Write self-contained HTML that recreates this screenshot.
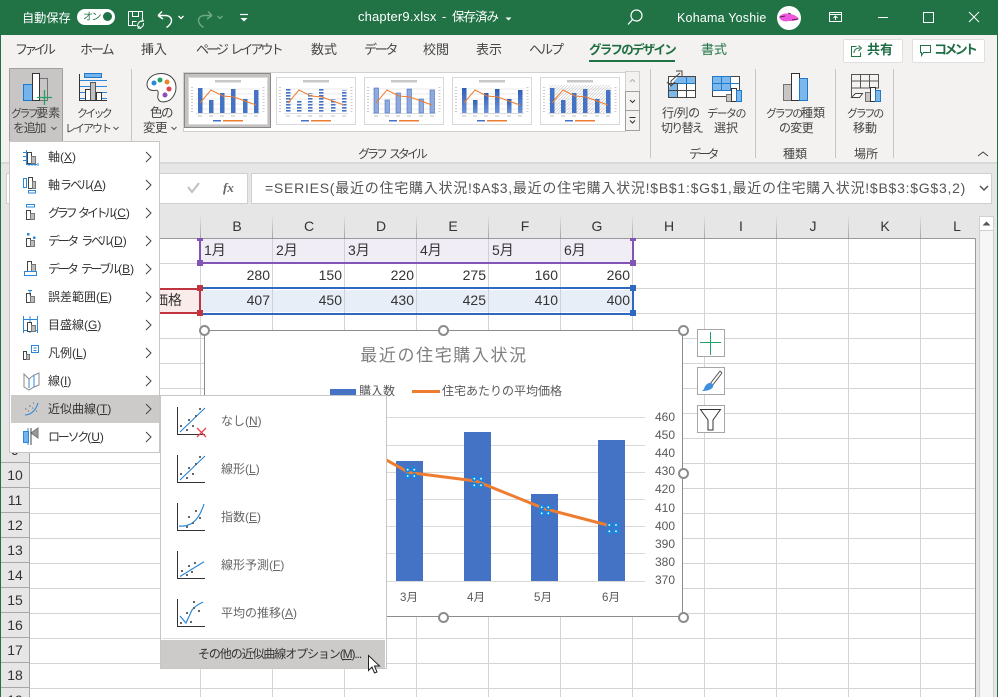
<!DOCTYPE html>
<html lang="ja"><head><meta charset="utf-8"><title>chapter9.xlsx</title>
<style>
html,body{margin:0;padding:0;width:998px;height:697px;overflow:hidden}
body{position:relative;background:#fff;font-family:"Liberation Sans","Noto Sans CJK JP",sans-serif;font-size:12px;color:#444}
div,svg{position:absolute}
.t{white-space:nowrap;line-height:16px;height:16px}
.c{text-align:center}
.w{color:#fff}
.tab{top:42px;font-size:13px;color:#444}
.r{white-space:nowrap;line-height:15px;height:15px;color:#444;font-size:12px}
.k{font-size:11px;letter-spacing:-2.6px}
.sep{top:69px;width:1px;height:89px;background:#c8c6c4}
.ch{top:218px;height:16px;line-height:16px;width:72px;text-align:center;font-size:14px;color:#333;margin-left:1px}
.cs{top:214px;width:1px;height:24px;background:linear-gradient(#e6e6e6,#a6a6a6)}
.rn{left:1px;width:28px;height:24px;background:#e6e6e6;border-bottom:1px solid #a6a6a6;text-align:center;font-size:14px;line-height:25px;color:#333;overflow:hidden}
.cell{height:24px;line-height:25px;font-size:14px;color:#333;white-space:nowrap}
.m{left:48px;color:#333;white-space:nowrap;font-size:12px;line-height:16px}
u{text-underline-offset:1px}
.ax{left:640px;width:35px;text-align:right;font-size:12px;line-height:14px;color:#595959}
.mx{color:#595959;font-size:11.5px;line-height:14px;width:30px;text-align:center}
.sm{left:221px;color:#666;font-size:12px;line-height:16px;white-space:nowrap}
.hd{width:6px;height:6px}
.cb{left:697px;width:26px;height:26px;background:#fff;border:1px solid #a6a6a6}
</style></head><body>

<!-- title bar -->
<div style="left:0;top:0;width:998px;height:35px;background:#217346"></div>
<div class="t w" style="left:22px;top:10px;font-size:12.2px">自動保存</div>
<div style="left:77px;top:9px;width:38px;height:16px;background:#fff;border-radius:8px"></div>
<div class="t" style="left:83px;top:10px;font-size:10px;color:#217346;letter-spacing:-1.500px">オン</div>
<div style="left:103px;top:12px;width:9px;height:9px;border-radius:50%;background:#217346"></div>
<svg style="left:0;top:0" width="998" height="35" fill="none" stroke="#fff">
 <path d="M128.500 11.500h14v8M128.500 11.500v14h8M132.500 11.500v5h6v-5M132.500 25.500v-4h4"/>
 <path d="M138 27a4.500 4.500 0 0 1 5-6M143.500 23a4.500 4.500 0 0 1-5 5M142 18.500l1.500 2.500-3 .5M139.500 26l-1.500 2 3 .5" stroke-width="1"/>
 <path d="M158 15.500l4-4M158 15.500l5 3.500M158.500 15.500h7c4 0 6 2.500 6 5 0 3-2 5-5 7" stroke-width="1.400"/>
 <path d="M178.500 16l2.500 2.500L183.500 16" stroke-width="1.300"/>
 <g stroke="#6ea98a"><path d="M212 15.500l-4-4M212 15.500l-5 3.500M211.500 15.500h-7c-4 0-6 2.500-6 5 0 3 2 5 5 7" stroke-width="1.400"/><path d="M217.500 16l2.500 2.500L222.500 16" stroke-width="1.300"/></g>
 <path d="M240 14.500h8" stroke-width="1.200"/><path d="M240.500 18h7l-3.500 3.500z" fill="#fff" stroke="none"/>
 <path d="M505.500 17.500h6l-3 3z" fill="#fff" stroke="none"/>
 <circle cx="636.500" cy="15.500" r="5.500" stroke-width="1.200"/><path d="M632.500 19.500l-4.500 5" stroke-width="1.300"/>
 <path d="M829.500 12.500h12v9h-12zM829.500 14.500h12" stroke-width="1"/><path d="M835.500 20v-4M833.500 18l2-2 2 2" stroke-width="1"/>
 <path d="M878 17.500h10"/><rect x="923.500" y="12.500" width="10" height="10"/><path d="M969 12l10 10M979 12l-10 10"/>
</svg>
<div class="t w" style="left:358px;top:9px;font-size:13px;letter-spacing:.15px">chapter9.xlsx</div>
<div class="t w" style="left:442px;top:9px;font-size:13px">-</div>
<div class="t w" style="left:452px;top:9px;font-size:12.500px;letter-spacing:-1px">保存済み</div>
<div class="t w" style="left:677px;top:10px;font-size:12.5px;letter-spacing:.2px">Kohama Yoshie</div>
<div style="left:777px;top:6px;width:24px;height:24px;border-radius:50%;background:#fff"></div>
<svg style="left:777px;top:6px" width="24" height="24"><path d="M2 11c3-4 8-4 10-3 4 0 8 2 10 5-3 2-8 2-10 2-5 1-8 0-10-4z" fill="#ee55dd"/><path d="M3 11l5-1M15 14l6-1M11 7l3 1" stroke="#222" stroke-width=".7"/></svg>

<!-- tab bar & ribbon -->
<div style="left:0;top:35px;width:998px;height:127px;background:#f3f2f1"></div>
<div style="left:0;top:162px;width:998px;height:2px;background:#d8d8d8"></div>
<div class="t tab" style="left:15px;letter-spacing:-3.700px">ファイル</div>
<div class="t tab" style="left:80px;letter-spacing:-2px">ホーム</div>
<div class="t tab" style="left:141px">挿入</div>
<div class="t tab" style="left:196px;letter-spacing:-2.900px;word-spacing:3.500px">ページ レイアウト</div>
<div class="t tab" style="left:311px">数式</div>
<div class="t tab" style="left:364px;letter-spacing:-2.300px">データ</div>
<div class="t tab" style="left:423px">校閲</div>
<div class="t tab" style="left:476px">表示</div>
<div class="t tab" style="left:529px;letter-spacing:-2px">ヘルプ</div>
<div class="t tab" style="left:589px;color:#1e6e41;font-weight:bold;font-size:12.500px;letter-spacing:-1.750px">グラフのデザイン</div>
<div style="left:589px;top:60px;width:86px;height:2px;background:#217346"></div>
<div class="t tab" style="left:701px;color:#217346">書式</div>
<div style="left:843px;top:39px;width:58px;height:22px;background:#fff;border:1px solid #e1dfdd;border-radius:2px"></div>
<div class="t" style="left:867px;top:42px;font-weight:bold;color:#1f6d45;font-size:13px">共有</div>
<svg style="left:850px;top:44px" width="14" height="14" fill="none" stroke="#217346"><path d="M6.500 2.500h-5v10h9v-4"/><path d="M4 9c0-3 2-5 6-5M8.500 1.500l3 2.500-3 3"/></svg>
<div style="left:912px;top:39px;width:71px;height:22px;background:#fff;border:1px solid #e1dfdd;border-radius:2px"></div>
<div class="t" style="left:934px;top:42px;font-weight:bold;color:#1f6d45;font-size:13px;letter-spacing:-2.700px">コメント</div>
<svg style="left:920px;top:44px" width="12" height="13" fill="none" stroke="#217346"><path d="M.5 1.500h10v7h-7l-2 3v-3h-1z"/></svg>

<div style="left:9px;top:68px;width:52px;height:73px;background:#c8c6c4;border:1px solid #a19f9d"></div>
<div class="sep" style="left:131px"></div><div class="sep" style="left:650px"></div><div class="sep" style="left:755px"></div><div class="sep" style="left:835px"></div><div class="sep" style="left:893px"></div>

<svg style="left:0;top:60px" width="998" height="75">
 <g transform="translate(0,-60)">
 <rect x="23.500" y="84.500" width="9" height="16" fill="#75b3ec" stroke="#1f78c8"/><rect x="38.500" y="78.500" width="9" height="22" fill="#c8c6c4" stroke="#737373"/><rect x="32.500" y="73.500" width="7" height="27" fill="#fff" stroke="#333"/>
 <path d="M44.500 90v15M37 97.500h15" stroke="#21a366" stroke-width="1.300"/>
 <rect x="84.500" y="73.500" width="17" height="4" fill="#75b3ec" stroke="#1f78c8"/>
 <path d="M79 80.500h28M79 86.500h28M79 92.500h28M79 98.500h28" stroke="#2b88d8"/>
 <rect x="85.500" y="89.500" width="5" height="11" fill="#fff" stroke="#333"/><rect x="90.500" y="82.500" width="5" height="18" fill="#c0c0c0" stroke="#555"/><rect x="96.500" y="92.500" width="5" height="8" fill="#fff" stroke="#333"/>
 <path d="M79.500 74v26.500H107" fill="none" stroke="#333"/>
 <path d="M161 73.500c-9 0-14 6-14 11 0 4 3 6 6 6 3 0 4-1 5 1 1 3-1 4 0 7 1 3 4 4 8 3 6-1 10-8 10-14 0-8-6-14-15-14z" fill="#fff" stroke="#444" stroke-width="1"/>
 <circle cx="154" cy="83" r="2.500" fill="#2b88d8"/><circle cx="160" cy="80" r="2.500" fill="#21a366"/><circle cx="167" cy="82" r="2.500" fill="#e8862e"/><circle cx="169" cy="89" r="2.500" fill="#e0434d"/><circle cx="165" cy="95" r="2.500" fill="#8d4fb5"/>
 <path d="M51.500 127l2.500 2.500 2.500-2.500M113.500 127l2.500 2.500 2.500-2.500M171.500 127l2.500 2.500 2.500-2.500" fill="none" stroke="#555"/>
 <rect x="668.500" y="76.500" width="27" height="21" fill="#fff"/>
 <path d="M678 76.500h17.500v7H677v7h-8.500V88z" fill="#7cb8ec"/>
 <rect x="668.500" y="90.500" width="9" height="7" fill="#7cb8ec"/>
 <rect x="668.500" y="76.500" width="27" height="21" fill="none" stroke="#444"/>
 <path d="M668.500 83.500h27M668.500 90.500h27M677.500 83.500v14M686.500 76.500v21" stroke="#444" fill="none"/>
 <path d="M678 83.500h17M686.500 76.500v7" stroke="#1f78c8"/>
 <path d="M667 82l4 4 4-4M671 85v-4l9-8M676 71h6v6" fill="none" stroke="#444"/>
 <rect x="712.500" y="76.500" width="27" height="20" fill="#fff" stroke="#444"/><rect x="712.500" y="76.500" width="18" height="14" fill="#7cb8ec" stroke="#1f78c8"/><path d="M712.500 83.500h27M721.500 76.500v14" stroke="#1f78c8"/>
 <rect x="726.500" y="94.500" width="5" height="7" fill="#c8c6c4" stroke="#737373"/><rect x="731.500" y="88.500" width="5" height="13" fill="#fff" stroke="#333"/><rect x="736.500" y="90.500" width="5" height="11" fill="#7cb8ec" stroke="#1f78c8"/>
 <rect x="783.500" y="84.500" width="8" height="16" fill="#c8c6c4" stroke="#737373"/><rect x="791.500" y="73.500" width="8" height="27" fill="#fff" stroke="#333"/><rect x="799.500" y="78.500" width="8" height="22" fill="#7cb8ec" stroke="#1f78c8"/>
 <path d="M851.500 96.500v-22h27v14M851.500 81h27M851.500 88h27M860.500 74v14M869.500 74v14" fill="none" stroke="#555"/>
 <path d="M851.500 97.500h8l3-4h-7z" fill="#fff" stroke="#444"/>
 <rect x="865.500" y="92.500" width="5" height="9" fill="#c8c6c4" stroke="#737373"/><rect x="870.500" y="87.500" width="5" height="14" fill="#fff" stroke="#333"/><rect x="875.500" y="90.500" width="5" height="11" fill="#7cb8ec" stroke="#1f78c8"/>
 </g>
</svg>

<div class="r" style="left:11px;top:106px"><span class="k">グラフ</span>要素</div>
<div class="r" style="left:13px;top:121px;letter-spacing:-1.300px">を追加</div>
<div class="r" style="left:77px;top:106px"><span class="k" style="letter-spacing:-2.750px">クイック</span></div>
<div class="r" style="left:65px;top:121px"><span class="k" style="letter-spacing:-2px">レイアウト</span></div>
<div class="r" style="left:150px;top:106px;font-size:12.500px;letter-spacing:-1.500px">色の</div>
<div class="r" style="left:143px;top:121px;font-size:12.500px;letter-spacing:-.500px">変更</div>
<div class="r" style="left:662px;top:106px;letter-spacing:-.4px">行/列の</div>
<div class="r" style="left:661px;top:121px;letter-spacing:-1.700px">切り替え</div>
<div class="r" style="left:707px;top:106px"><span class="k" style="letter-spacing:-1.500px">データの</span></div>
<div class="r" style="left:714px;top:121px">選択</div>
<div class="r" style="left:766px;top:106px"><span class="k" style="letter-spacing:-2.250px">グラフの</span>種類</div>
<div class="r" style="left:779px;top:121px;letter-spacing:-.700px">の変更</div>
<div class="r" style="left:847px;top:106px"><span class="k" style="letter-spacing:-2.250px">グラフの</span></div>
<div class="r" style="left:853px;top:121px">移動</div>
<div class="t" style="left:358px;top:146px;letter-spacing:-3px;word-spacing:3.500px">グラフ スタイル</div>
<div class="t" style="left:689px;top:146px;letter-spacing:-2.800px">データ</div>
<div class="t c" style="left:770px;top:146px;width:50px">種類</div>
<div class="t c" style="left:841px;top:146px;width:50px">場所</div>
<svg style="left:975px;top:148px" width="16" height="12" fill="none" stroke="#444"><path d="M3 8l5-4 5 4"/></svg>

<!-- gallery -->
<div style="left:183px;top:72px;width:441px;height:58px;background:#fff;border:1px solid #d2d0ce"></div>
<div style="left:184px;top:73px;width:87px;height:55px;background:#c4c2c0;border:1px solid #8a8886;box-sizing:border-box"></div>
<svg style="left:0;top:60px" width="640" height="75">
 <defs>
  <pattern id="st" width="4" height="3" patternUnits="userSpaceOnUse"><rect width="4" height="1.600" fill="#4472c4"/></pattern>
  <pattern id="ht" width="3" height="3" patternUnits="userSpaceOnUse"><path d="M0 3L3 0" stroke="#c4c4c4" stroke-width=".6"/></pattern>
  <linearGradient id="gr" x1="0" y1="0" x2="0" y2="1"><stop offset="0" stop-color="#2f5fb5"/><stop offset="1" stop-color="#6d94d8"/></linearGradient>
  <g id="fr">
   <rect x=".5" y=".5" width="79" height="47" fill="#fff" stroke="#d9d9d9"/>
   <path d="M8 12h64M8 17h64M8 22h64M8 27h64M8 32h64" stroke="#e2e2e2" stroke-width=".8"/>
   <rect x="27" y="3" width="26" height="2.500" fill="#c8c8c8"/>
   <path d="M8 36.500h64" stroke="#bbb" stroke-width=".6"/>
   <path d="M10 39h4M21 39h4M32 39h4M43 39h4M55 39h4M66 39h4" stroke="#aaa" stroke-width=".8"/>
   <path d="M4 10v26M75.500 10v26" stroke="#ccc" stroke-width="2" stroke-dasharray="1 2"/>
  </g>
  <path id="ln" d="M12 26L23 13 35 19 46 20 57 24 68 28" fill="none" stroke="#ed7d31" stroke-width="1"/>
  <g id="lg"><rect x="25" y="43" width="8" height="1.500" fill="#4472c4"/><rect x="35" y="43" width="20" height="1.500" fill="#ed7d31"/></g>
  <g id="bs"><rect x="10" y="11" width="4.500" height="25"/><rect x="21" y="23" width="4.500" height="13"/><rect x="32" y="16" width="4.500" height="20"/><rect x="43" y="12" width="4.500" height="24"/><rect x="55" y="22" width="4.500" height="14"/><rect x="66" y="13" width="4.500" height="23"/></g>
 </defs>
 <g transform="translate(0,-60)">
  <g transform="translate(188,77)"><use href="#fr"/><use href="#bs" fill="#4472c4"/><use href="#ln"/><use href="#lg"/></g>
  <g transform="translate(276,77)"><use href="#fr"/><use href="#bs" fill="url(#st)"/><use href="#ln"/><use href="#lg"/></g>
  <g transform="translate(364,77)"><use href="#fr"/><use href="#bs" fill="#8fa9dc" stroke="#4472c4" stroke-width=".6"/><use href="#ln"/><use href="#lg"/></g>
  <g transform="translate(452,77)"><use href="#fr"/><use href="#bs" fill="url(#gr)"/><use href="#ln"/><use href="#lg"/></g>
  <g transform="translate(540,77)"><use href="#fr"/><rect x="9" y="8" width="62" height="28" fill="url(#ht)"/><use href="#bs" fill="#4472c4"/><use href="#ln"/><use href="#lg"/></g>
  <rect x="625.500" y="71.500" width="14" height="20" fill="#f3f2f1" stroke="#d2d0ce"/><rect x="625.500" y="91.500" width="14" height="19" fill="#f3f2f1" stroke="#a19f9d"/><rect x="625.500" y="110.500" width="14" height="20" fill="#f3f2f1" stroke="#a19f9d"/>
  <path d="M630 82l2.500-2.500L635 82" fill="none" stroke="#b0b0b0"/><path d="M630 100l2.500 2.500L635 100" fill="none" stroke="#333"/><path d="M629.500 117.500h6M630 120.500l2.500 2.500 2.500-2.500" fill="none" stroke="#333"/>
 </g>
</svg>

<!-- formula bar -->
<div style="left:0;top:164px;width:998px;height:74px;background:#e6e6e6"></div>
<div style="left:6px;top:173px;width:240px;height:29px;background:#fff;border:1px solid #d0d0d0"></div>
<div style="left:251px;top:173px;width:739px;height:29px;background:#fff;border:1px solid #d0d0d0"></div>
<svg style="left:180px;top:178px" width="60" height="20" fill="none"><path d="M8 9l4 5 7-9" stroke="#c0c0c0" stroke-width="2"/></svg>
<div style="left:223px;top:180px;font-family:'Liberation Serif',serif;font-style:italic;font-weight:bold;font-size:13px;line-height:16px;color:#666">fx</div>
<div class="t" style="left:265px;top:180px;font-size:14px;color:#555;letter-spacing:.75px">=SERIES(最近の住宅購入状況!$A$3,最近の住宅購入状況!$B$1:$G$1,最近の住宅購入状況!$B$3:$G$3,2)</div>
<svg style="left:978px;top:184px" width="12" height="10" fill="none"><path d="M2 2l4 4 4-4" stroke="#555" stroke-width="1.500"/></svg>

<!-- sheet -->
<div style="left:30px;top:239px;width:945px;height:458px;background:#fff;background-image:linear-gradient(to top,#d4d4d4 1px,transparent 1px);background-size:100% 25px"></div>
<div style="left:200px;top:239px;width:775px;height:458px;background-image:linear-gradient(to right,#d4d4d4 1px,transparent 1px);background-size:72px 100%"></div>
<div style="left:30px;top:238px;width:945px;height:1px;background:#9a9a9a"></div>
<div style="left:975px;top:238px;width:1px;height:459px;background:#9a9a9a"></div>
<div style="left:976px;top:238px;width:22px;height:459px;background:#e6e6e6"></div>
<div style="left:979px;top:216px;width:15px;height:481px;background:#f6f6f6;border-left:1px solid #d0d0d0;border-right:1px solid #d0d0d0;box-sizing:border-box"></div>
<div style="left:979px;top:216px;width:15px;height:15px;background:#fff;border:1px solid #d0d0d0;box-sizing:border-box"></div>
<svg style="left:981px;top:220px" width="11" height="7"><path d="M1.500 5.500h8L5.500 1.500z" fill="#555"/></svg>
<div style="left:29px;top:238px;width:1px;height:459px;background:#a6a6a6"></div>
<div style="left:1px;top:238px;width:28px;height:459px;background:#e6e6e6"></div>

<div class="cs" style="left:200px"></div><div class="cs" style="left:272px"></div><div class="cs" style="left:344px"></div><div class="cs" style="left:416px"></div><div class="cs" style="left:488px"></div><div class="cs" style="left:560px"></div><div class="cs" style="left:632px"></div><div class="cs" style="left:704px"></div><div class="cs" style="left:776px"></div><div class="cs" style="left:848px"></div><div class="cs" style="left:920px"></div>
<div class="ch" style="left:200px">B</div><div class="ch" style="left:272px">C</div><div class="ch" style="left:344px">D</div><div class="ch" style="left:416px">E</div><div class="ch" style="left:488px">F</div><div class="ch" style="left:560px">G</div><div class="ch" style="left:632px">H</div><div class="ch" style="left:704px">I</div><div class="ch" style="left:776px">J</div><div class="ch" style="left:848px">K</div><div class="ch" style="left:920px">L</div>

<div class="rn" style="top:438px">9</div><div class="rn" style="top:463px">10</div><div class="rn" style="top:488px">11</div><div class="rn" style="top:513px">12</div><div class="rn" style="top:538px">13</div><div class="rn" style="top:563px">14</div><div class="rn" style="top:588px">15</div><div class="rn" style="top:613px">16</div><div class="rn" style="top:638px">17</div><div class="rn" style="top:663px">18</div><div class="rn" style="top:688px;height:9px;border:0">19</div>

<!-- selected ranges -->
<div style="left:201px;top:239px;width:431px;height:23px;background-color:#f0edf7;background-image:linear-gradient(to right,#d0d0d8 1px,transparent 1px);background-size:72px 100%;background-position:71px 0"></div>
<div style="left:201px;top:290px;width:431px;height:22px;background-color:#e8eef8;background-image:linear-gradient(to right,#cdd3dc 1px,transparent 1px);background-size:72px 100%;background-position:71px 0"></div>
<div style="left:150px;top:290px;width:50px;height:22px;background:#fbecec"></div>
<div style="left:150px;top:288px;width:50px;height:2px;background:#c0343f"></div><div style="left:150px;top:312px;width:50px;height:2px;background:#c0343f"></div>
<div style="left:199px;top:290px;width:2px;height:22px;background:#c0343f"></div>
<div style="left:200px;top:262px;width:432px;height:2px;background:#8055b5"></div>
<div style="left:199px;top:240px;width:2px;height:22px;background:#8055b5"></div><div style="left:632px;top:240px;width:2px;height:22px;background:#8055b5"></div>
<div style="left:200px;top:287px;width:432px;height:2px;background:#2f68c0"></div><div style="left:200px;top:313px;width:432px;height:2px;background:#2f68c0"></div>
<div style="left:632px;top:291px;width:2px;height:20px;background:#2f68c0"></div>
<div class="hd" style="left:197px;top:238px;height:3px;background:#8055b5"></div><div class="hd" style="left:630px;top:238px;height:3px;background:#8055b5"></div><div class="hd" style="left:197px;top:260px;background:#8055b5"></div><div class="hd" style="left:630px;top:260px;background:#8055b5"></div>
<div class="hd" style="left:197px;top:285px;background:#c0343f"></div><div class="hd" style="left:197px;top:310px;background:#c0343f"></div><div class="hd" style="left:630px;top:285px;background:#2f68c0"></div><div class="hd" style="left:630px;top:310px;background:#2f68c0"></div>
<div class="cell" style="left:204px;top:238px">1月</div><div class="cell" style="left:276px;top:238px">2月</div><div class="cell" style="left:348px;top:238px">3月</div><div class="cell" style="left:420px;top:238px">4月</div><div class="cell" style="left:492px;top:238px">5月</div><div class="cell" style="left:564px;top:238px">6月</div>
<div class="cell" style="left:200px;top:263px;width:70px;text-align:right">280</div><div class="cell" style="left:272px;top:263px;width:70px;text-align:right">150</div><div class="cell" style="left:344px;top:263px;width:70px;text-align:right">220</div><div class="cell" style="left:416px;top:263px;width:70px;text-align:right">275</div><div class="cell" style="left:488px;top:263px;width:70px;text-align:right">160</div><div class="cell" style="left:560px;top:263px;width:70px;text-align:right">260</div>
<div class="cell" style="left:200px;top:288px;width:70px;text-align:right">407</div><div class="cell" style="left:272px;top:288px;width:70px;text-align:right">450</div><div class="cell" style="left:344px;top:288px;width:70px;text-align:right">430</div><div class="cell" style="left:416px;top:288px;width:70px;text-align:right">425</div><div class="cell" style="left:488px;top:288px;width:70px;text-align:right">410</div><div class="cell" style="left:560px;top:288px;width:70px;text-align:right">400</div>
<div class="cell" style="left:154px;top:288px">価格</div>

<!-- chart -->
<div style="left:204px;top:330px;width:479px;height:287px;background:#fff;border:1px solid #8c8c8c;box-sizing:border-box"></div>
<svg style="left:0;top:0;pointer-events:none" width="998" height="697">
 <defs><g id="dt"><circle r="2.800" fill="#1588e0"/><circle r=".9" fill="#fff"/></g></defs>
 <path d="M380 417.500h265M380 445.500h265M380 472.500h265M380 499.500h265M380 526.500h265M380 553.500h265M380 581.500h265" stroke="#d9d9d9"/>
 <g fill="#4472c4"><rect x="396" y="461" width="27" height="120"/><rect x="464" y="432" width="27" height="149"/><rect x="531" y="494" width="27" height="87"/><rect x="598" y="440" width="27" height="141"/></g>
 <path d="M380 456.500L409 472.500 476 481 544 508.500 611 526" fill="none" stroke="#ed7d31" stroke-width="3" stroke-linejoin="round"/>
 <use href="#dt" x="407.700" y="469.700"/><use href="#dt" x="414.300" y="469.700"/><use href="#dt" x="407.700" y="476"/><use href="#dt" x="414.300" y="476"/>
 <use href="#dt" x="474.300" y="478.700"/><use href="#dt" x="481" y="478.700"/><use href="#dt" x="474.300" y="485.300"/><use href="#dt" x="481" y="485.300"/>
 <use href="#dt" x="541.700" y="507.300"/><use href="#dt" x="548.300" y="507.300"/><use href="#dt" x="541.700" y="513.300"/><use href="#dt" x="548.300" y="513.300"/>
 <use href="#dt" x="609.300" y="525"/><use href="#dt" x="616" y="525"/><use href="#dt" x="609.300" y="531.300"/><use href="#dt" x="616" y="531.300"/>
 <rect x="330" y="389" width="26" height="6" fill="#4472c4"/>
 <path d="M412 391.500h28" stroke="#ed7d31" stroke-width="3"/>
 <g fill="#fff" stroke="#8c8c8c" stroke-width="2"><circle cx="204.500" cy="330.500" r="4.500"/><circle cx="443.500" cy="330.500" r="4.500"/><circle cx="683.500" cy="330.500" r="4.500"/><circle cx="683.500" cy="473.500" r="4.500"/><circle cx="443.500" cy="617.500" r="4.500"/><circle cx="683.500" cy="617.500" r="4.500"/></g>
</svg>
<div class="t c" style="left:344px;top:344px;width:200px;height:24px;line-height:24px;font-size:17px;letter-spacing:1.6px;color:#7f7f7f">最近の住宅購入状況</div>
<div class="t" style="left:359px;top:383px;color:#595959">購入数</div>
<div class="t" style="left:442px;top:383px;color:#595959">住宅あたりの平均価格</div>
<div class="ax" style="top:410px">460</div><div class="ax" style="top:428px">450</div><div class="ax" style="top:446px">440</div><div class="ax" style="top:464px">430</div><div class="ax" style="top:482px">420</div><div class="ax" style="top:501px">410</div><div class="ax" style="top:519px">400</div><div class="ax" style="top:537px">390</div><div class="ax" style="top:555px">380</div><div class="ax" style="top:573px">370</div>
<div class="mx" style="left:394px;top:591px">3月</div><div class="mx" style="left:461px;top:591px">4月</div><div class="mx" style="left:528px;top:591px">5月</div><div class="mx" style="left:596px;top:591px">6月</div>

<div class="cb" style="top:329px"></div><div class="cb" style="top:367px"></div><div class="cb" style="top:405px"></div>
<svg style="left:697px;top:329px" width="28" height="104" fill="none">
 <path d="M13.500 3v23M3 13.500h21" stroke="#21a366"/>
 <path d="M23 42l-10 13M25 44L15 57M23 42l2 2" stroke="#555"/>
 <path d="M13 54c2 0 4 1 3 4-2 3-6 4-11 4 3-2 2-4 4-6 1-1 2-2 4-2z" fill="#3f8fdc"/>
 <path d="M3.500 80.500h20L16 91v10h-5V91z" stroke="#333"/>
</svg>

<!-- menu 1 -->
<div style="left:9px;top:141px;width:151px;height:312px;background:#fff;border:1px solid #c8c6c4;box-sizing:border-box"></div>
<div style="left:11px;top:395px;width:148px;height:28px;background:#cdcbc9"></div>
<div class="m" style="top:149px">軸(<u>X</u>)</div>
<div class="m" style="top:177px">軸<span style="letter-spacing:-2px">ラベル</span>(<u>A</u>)</div>
<div class="m" style="top:205px"><span style="letter-spacing:-3.200px;word-spacing:3.500px">グラフ タイトル</span>(<u>C</u>)</div>
<div class="m" style="top:233px"><span style="letter-spacing:-2.400px;word-spacing:3.500px">データ ラベル</span>(<u>D</u>)</div>
<div class="m" style="top:261px"><span style="letter-spacing:-2.500px;word-spacing:3.500px">データ テーブル</span>(<u>B</u>)</div>
<div class="m" style="top:289px">誤差範囲(<u>E</u>)</div>
<div class="m" style="top:317px">目盛線(<u>G</u>)</div>
<div class="m" style="top:345px">凡例(<u>L</u>)</div>
<div class="m" style="top:373px">線(<u>I</u>)</div>
<div class="m" style="top:401px">近似曲線(<u>T</u>)</div>
<div class="m" style="top:429px"><span style="letter-spacing:-2.200px">ローソク</span>(<u>U</u>)</div>
<svg style="left:0;top:140px" width="162" height="315" fill="none">
 <g transform="translate(0,-140)">
 <path d="M146 152l5 5-5 5M146 180l5 5-5 5M146 208l5 5-5 5M146 236l5 5-5 5M146 264l5 5-5 5M146 292l5 5-5 5M146 320l5 5-5 5M146 348l5 5-5 5M146 376l5 5-5 5M146 404l5 5-5 5M146 432l5 5-5 5" stroke="#444"/>
 <path d="M23 152.500h4M23 156.500h4M23 160.500h4M26.500 150v14.500H37M29 163v3M32 163v3M35 163v3M38 163v3" stroke="#2b88d8"/>
 <rect x="27.500" y="152.500" width="4" height="11" stroke="#444" fill="#fff"/><rect x="31.500" y="156.500" width="4" height="7" stroke="#777" fill="#bbb"/>
 <rect x="23.500" y="178.500" width="3" height="9" stroke="#2b88d8"/><rect x="28.500" y="177.500" width="4" height="11" stroke="#444"/><rect x="32.500" y="181.500" width="3" height="7" stroke="#777" fill="#bbb"/><rect x="28.500" y="190.500" width="7" height="2.500" stroke="#2b88d8"/>
 <rect x="26.500" y="204.500" width="8" height="2.500" stroke="#2b88d8"/><rect x="26.500" y="210.500" width="4" height="9" stroke="#444"/><rect x="30.500" y="213.500" width="4" height="6" stroke="#777" fill="#bbb"/>
 <rect x="27" y="233" width="2.500" height="2.500" fill="#2b88d8"/><rect x="33" y="236.500" width="2.500" height="2.500" fill="#2b88d8"/><rect x="26.500" y="238.500" width="4" height="8" stroke="#444"/><rect x="30.500" y="240.500" width="4" height="6" stroke="#777" fill="#bbb"/>
 <rect x="27.500" y="261.500" width="4" height="10" stroke="#444"/><rect x="31.500" y="264.500" width="4" height="7" stroke="#777" fill="#bbb"/><rect x="24.500" y="271.500" width="12" height="4" stroke="#2b88d8"/>
 <path d="M30 290v5M28 290.500h4" stroke="#2b88d8"/><rect x="26.500" y="293.500" width="4" height="9" stroke="#444"/><rect x="30.500" y="296.500" width="4" height="6" stroke="#777" fill="#bbb"/>
 <path d="M23 319.500h15M23 330.500h15M23.500 316v17M30 316v17M37.500 316v17" stroke="#2b88d8"/><rect x="27.500" y="322.500" width="4" height="9" stroke="#444" fill="#fff"/><rect x="31.500" y="325.500" width="4" height="6" stroke="#777" fill="#bbb"/>
 <rect x="31.500" y="345.500" width="7" height="7" stroke="#2b88d8"/><path d="M33.500 348h3M33.500 350.500h3" stroke="#2b88d8"/><rect x="23.500" y="351.500" width="3" height="8" stroke="#444"/><rect x="26.500" y="354.500" width="3" height="5" stroke="#777" fill="#bbb"/>
 <path d="M24 374l5 5 5-4 5-2v12l-5 2-5 3-5-3z" stroke="#8a8a8a"/><path d="M29 379v9M34 375v12" stroke="#2b88d8"/>
 <path d="M25 415c6 0 11-5 13-12" stroke="#2b88d8" stroke-width="1.100"/><path d="M25 409h1.500M28 411h1M29 406h1.500M32 408h1M33 403h1M36 411h1" stroke="#666"/>
 <path d="M23.500 431.500h5v11h-5zM28 428v17" stroke="#2b88d8"/><rect x="24" y="432" width="4" height="10" fill="#75b3ec"/><path d="M31 433l7-5v10z" fill="#999" stroke="#777"/><path d="M31 428v17" stroke="#444"/>
 </g>
</svg>

<!-- submenu -->
<div style="left:160px;top:395px;width:227px;height:274px;background:#fff;border:1px solid #c8c6c4;box-sizing:border-box"></div>
<div style="left:162px;top:638px;width:223px;height:1px;background:#e1dfdd"></div>
<div style="left:161px;top:640px;width:224px;height:28px;background:#cdcbc9"></div>
<div class="sm" style="top:413px">なし(<u>N</u>)</div>
<div class="sm" style="top:461px">線形(<u>L</u>)</div>
<div class="sm" style="top:509px">指数(<u>E</u>)</div>
<div class="sm" style="top:557px">線形予測(<u>F</u>)</div>
<div class="sm" style="top:605px">平均の推移(<u>A</u>)</div>
<div class="t" style="left:198px;top:646px;color:#333;font-size:12px;letter-spacing:-1.100px">その他の近似曲線オプション(<u>M</u>)...</div>
<svg style="left:170px;top:400px" width="220" height="280" fill="none">
 <g transform="translate(-170,-400)">
  <g stroke="#333"><path d="M177.500 407v27.500H205M177.500 455v27.500H205M177.500 503v27.500H205M177.500 551v27.500H205M177.500 599v27.500H205"/></g>
  <g stroke="#2b88d8" stroke-width="1.200"><path d="M180 432l25-24M180 480l25-24M179 526c10 1 19-3 25-22M180 576.500L204 561.700M180 616l6 7 6-13c2-3 7-6 11-8"/></g>
  <g fill="#666"><rect x="180" y="425" width="2" height="2"/><rect x="186" y="429" width="2" height="2"/><rect x="188" y="419" width="2" height="2"/><rect x="192" y="425" width="2" height="2"/><rect x="195" y="415" width="2" height="2"/><rect x="199" y="408" width="2" height="2"/>
  <rect x="180" y="473" width="2" height="2"/><rect x="186" y="477" width="2" height="2"/><rect x="188" y="467" width="2" height="2"/><rect x="192" y="473" width="2" height="2"/><rect x="195" y="463" width="2" height="2"/><rect x="199" y="456" width="2" height="2"/>
  <rect x="186" y="526" width="2" height="2"/><rect x="188" y="516" width="2" height="2"/><rect x="192" y="522" width="2" height="2"/><rect x="195" y="510" width="2" height="2"/><rect x="199" y="517" width="2" height="2"/>
  <rect x="181" y="570" width="2" height="2"/><rect x="186" y="574" width="2" height="2"/><rect x="188" y="565" width="2" height="2"/><rect x="191" y="571" width="2" height="2"/><rect x="194" y="562" width="2" height="2"/>
  <rect x="180" y="622" width="2" height="2"/><rect x="186" y="612" width="2" height="2"/><rect x="190" y="621" width="2" height="2"/><rect x="193" y="607" width="2" height="2"/><rect x="198" y="610" width="2" height="2"/><rect x="193" y="601" width="2" height="2"/></g>
  <path d="M197 428l9 9M206 428l-9 9" stroke="#e8434d" stroke-width="1.300"/>
 </g>
 <g transform="translate(-170,-400)"><path d="M368.500 655.500v15l3.500-3.500 2.500 6 2.500-1-2.500-6h5z" fill="#fff" stroke="#222"/></g>
</svg>

<!-- window edges -->
<div style="left:0;top:35px;width:1px;height:662px;background:#217346"></div>
<div style="left:997px;top:35px;width:1px;height:662px;background:#217346"></div>
</body></html>
